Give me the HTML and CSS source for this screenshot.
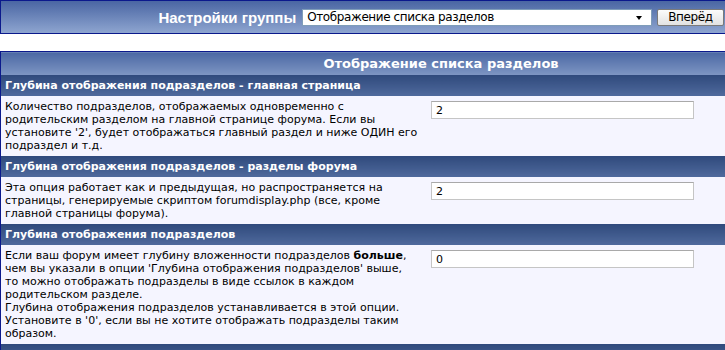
FILE: index.html
```html
<!DOCTYPE html>
<html lang="ru">
<head>
    <meta charset="UTF-8">
    <title>Настройки группы</title>
    <link rel="stylesheet" href="styles.css">
</head>
<body>
    <div class="page">
        <form class="topbar">
            <span class="group-label">Настройки группы</span>
            <div class="select-wrap">
                <select class="group-select">
                    <option>Отображение списка разделов</option>
                </select>
                <span class="arrow"></span>
            </div>
            <button type="button" class="go">Вперёд</button>
        </form>

        <table class="tborder">
            <tr class="tcat">
                <td colspan="2">Отображение списка разделов</td>
            </tr>
            <tr class="thead">
                <td colspan="2">Глубина отображения подразделов - главная страница</td>
            </tr>
            <tr class="alt1">
                <td class="label">Количество подразделов, отображаемых одновременно с родительским разделом на главной странице форума. Если вы установите '2', будет отображаться главный раздел и ниже ОДИН его подраздел и т.д.</td>
                <td class="value"><input type="text" value="2"></td>
            </tr>
            <tr class="thead">
                <td colspan="2">Глубина отображения подразделов - разделы форума</td>
            </tr>
            <tr class="alt1">
                <td class="label">Эта опция работает как и предыдущая, но распространяется на страницы, генерируемые скриптом forumdisplay.php (все, кроме главной страницы форума).</td>
                <td class="value"><input type="text" value="2"></td>
            </tr>
            <tr class="thead">
                <td colspan="2">Глубина отображения подразделов</td>
            </tr>
            <tr class="alt1">
                <td class="label">Если ваш форум имеет глубину вложенности подразделов <strong>больше</strong>, чем вы указали в опции 'Глубина отображения подразделов' выше,<br>то можно отображать подразделы в виде ссылок в каждом родительском разделе.<br>Глубина отображения подразделов устанавливается в этой опции. Установите в '0', если вы не хотите отображать подразделы таким образом.</td>
                <td class="value"><input type="text" value="0"></td>
            </tr>
            <tr class="thead">
                <td colspan="2">&nbsp;</td>
            </tr>
        </table>
    </div>
</body>
</html>
```

FILE: styles.css
```css
body {
    margin: 0;
    overflow: hidden;
    background: #ffffff;
    font-family: "DejaVu Sans", Verdana, sans-serif;
    font-size: 11px;
    color: #000000;
}
.page {
    width: 882px;
}
.topbar {
    display: flex;
    justify-content: center;
    align-items: center;
    height: 32px;
    margin: 0 0 17px 0;
    border: 1px solid #0b198c;
    background: linear-gradient(#4a66a3, #8ea5d0);
}
.group-label {
    color: #ffffff;
    font-family: "Liberation Sans", Arial, sans-serif;
    font-weight: bold;
    font-size: 15px;
    margin-right: 6px;
}
.select-wrap {
    position: relative;
    margin-right: 5px;
}
.group-select {
    appearance: none;
    width: 350px;
    height: 17px;
    padding: 0 4px;
    border: 1px solid #7f9db9;
    border-radius: 0;
    background: #ffffff;
    font-family: "DejaVu Sans", Verdana, sans-serif;
    font-size: 12px;
    letter-spacing: -0.4px;
    color: #000000;
}
.arrow {
    position: absolute;
    right: 10px;
    top: 7px;
    border-left: 3px solid transparent;
    border-right: 3px solid transparent;
    border-top: 4px solid #000000;
}
.go {
    height: 17px;
    padding: 0 10px;
    border: 1px solid #7a7a7a;
    border-radius: 2px;
    background: linear-gradient(#fbfbfb, #e2e2e2);
    font-family: "DejaVu Sans", Verdana, sans-serif;
    font-size: 12px;
    letter-spacing: -0.4px;
    line-height: 13px;
    color: #000000;
}
.tborder {
    width: 100%;
    border-collapse: collapse;
    border: 1px solid #0b198c;
}
.tborder td {
    padding: 4px;
    line-height: 13px;
}
.tcat td {
    background: linear-gradient(#4b68a4, #7e96c3);
    color: #ffffff;
    font-weight: bold;
    font-size: 13px;
    line-height: 15px;
    text-align: center;
}
.thead td {
    background: linear-gradient(#2f4a7c, #4f699c);
    color: #ffffff;
    font-weight: bold;
}
.alt1 td {
    background: #f5f5ff;
    vertical-align: top;
}
.label {
    width: 418px;
}
.value input {
    box-sizing: border-box;
    width: 263px;
    height: 18px;
    margin: 1px 0 0 0;
    padding: 0 4px;
    border: 1px solid #c5c5c5;
    border-top-color: #a9a9a9;
    font-family: "DejaVu Sans", Verdana, sans-serif;
    font-size: 11px;
}
```
